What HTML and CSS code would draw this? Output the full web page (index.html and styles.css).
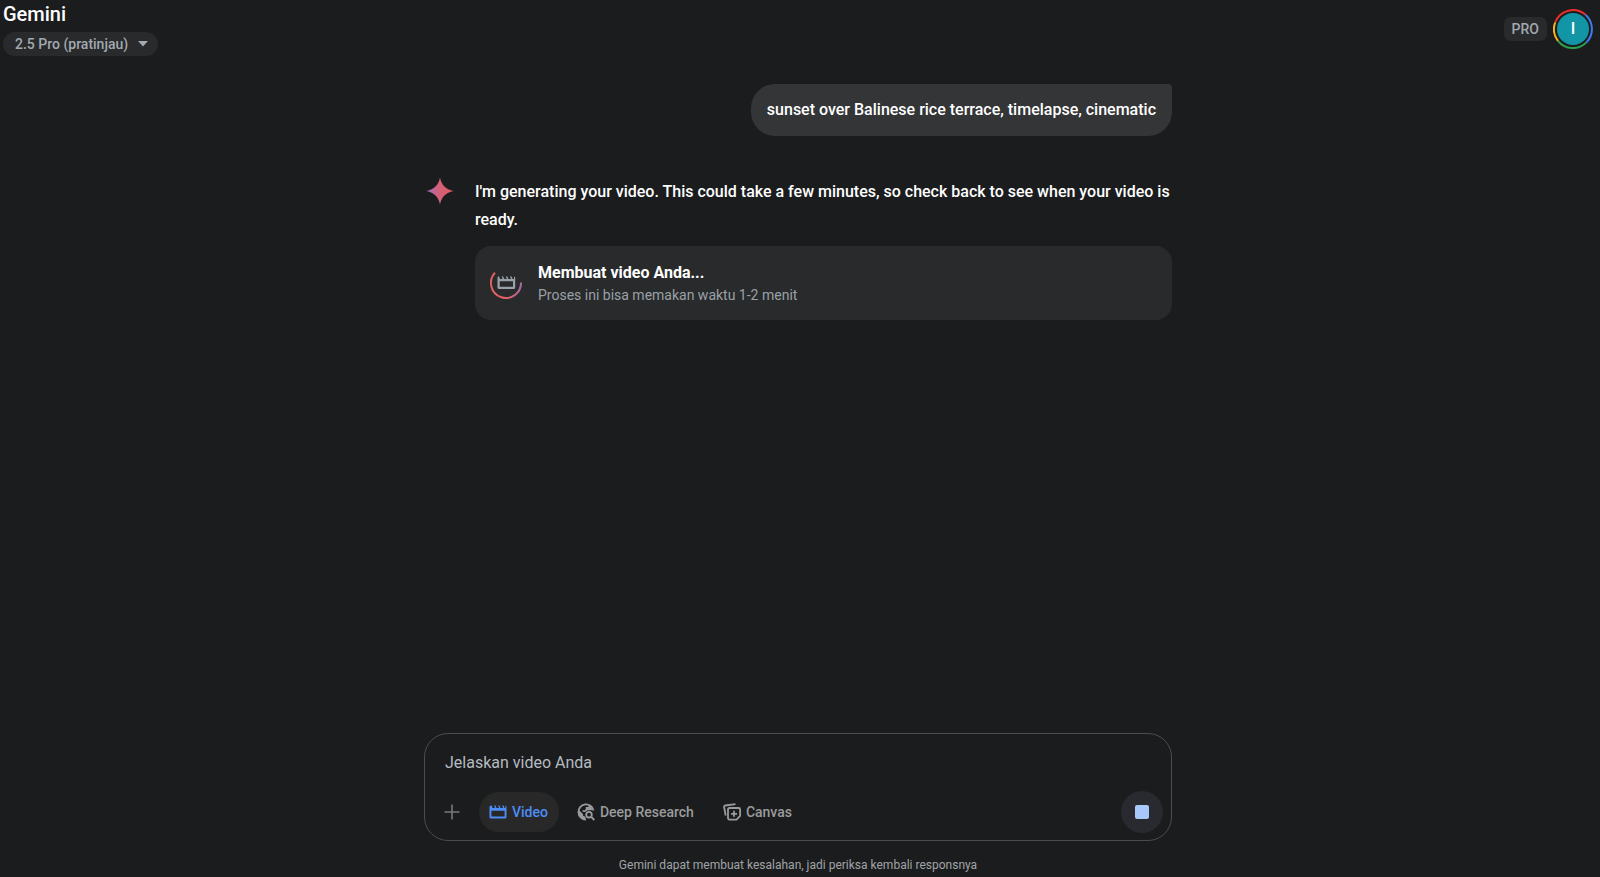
FILE: index.html
```html
<!DOCTYPE html>
<html lang="id">
<head>
    <meta charset="UTF-8">
    <meta name="viewport" content="width=device-width, initial-scale=1.0">
    <title>Gemini</title>
    <link rel="stylesheet" href="styles.css">
</head>
<body>
    <header class="topbar">
        <div class="brand">
            <h1>Gemini</h1>
            <button class="model" type="button">
                2.5 Pro (pratinjau)
                <svg width="10" height="6" viewBox="0 0 10 6"><path d="M0 0h10L5 5.5z" fill="currentColor"/></svg>
            </button>
        </div>
        <div class="account">
            <span class="plan">PRO</span>
            <button class="avatar" type="button" aria-label="Akun">
                <svg class="ring" viewBox="0 0 40 40" fill="none" stroke-width="2">
                    <path d="M2.2 13.5A19 19 0 0 1 32.5 5.8" stroke="#ea2f2a"/>
                    <path d="M32.5 5.8A19 19 0 0 1 33.4 33.4" stroke="#3f7bf0"/>
                    <path d="M33.4 33.4A19 19 0 0 1 5 31.8" stroke="#2ba24c"/>
                    <path d="M5 31.8A19 19 0 0 1 2.2 13.5" stroke="#f9b51e"/>
                </svg>
                <span class="initial">I</span>
            </button>
        </div>
    </header>

    <main class="chat">
        <div class="prompt">
            <p>sunset over Balinese rice terrace, timelapse, cinematic</p>
        </div>

        <div class="response">
            <svg class="spark" viewBox="0 0 28 28">
                <defs>
                    <linearGradient id="spark-fill" x1="0" y1="0" x2="1" y2="0">
                        <stop offset="0" stop-color="#9a6fc0"/>
                        <stop offset="0.4" stop-color="#d0617f"/>
                        <stop offset="1" stop-color="#e05a5c"/>
                    </linearGradient>
                </defs>
                <path d="M14 0.5C15.4 8 20 12.6 27.5 14C20 15.4 15.4 20 14 27.5C12.6 20 8 15.4 0.5 14C8 12.6 12.6 8 14 0.5z" fill="url(#spark-fill)"/>
            </svg>
            <div class="answer">
                <p>I'm generating your video. This could take a few minutes, so check back to see when your video is ready.</p>
                <div class="job">
                    <svg class="progress" viewBox="0 0 32 32">
                        <defs>
                            <linearGradient id="arc" x1="0" y1="0" x2="1" y2="0">
                                <stop offset="0.5" stop-color="#e05f62"/>
                                <stop offset="1" stop-color="#a96a9c"/>
                            </linearGradient>
                        </defs>
                        <path d="M5 5.8A15 15 0 1 0 31 15.5" fill="none" stroke="url(#arc)" stroke-width="2"/>
                        <path d="M8 9.5h1l1 2.500h2.600l-1-2.500h1.600l1 2.500h2.600l-1-2.500h1.600l1 2.500h2.600l-1-2.500h1.600l1 2.500H24v-2.500q1.200.2 1.200 1.500v9.500q0 1.500-1.500 1.500H9Q7.500 22 7.500 20.500V11Q7.500 9.700 8 9.500zM9.700 14.200v5.500h13.300v-5.500z" fill="#9aa0a9" fill-rule="evenodd"/>
                    </svg>
                    <div>
                        <h2>Membuat video Anda...</h2>
                        <p>Proses ini bisa memakan waktu 1-2 menit</p>
                    </div>
                </div>
            </div>
        </div>
    </main>

    <footer class="bottom">
        <form class="composer">
            <input type="text" placeholder="Jelaskan video Anda" aria-label="Jelaskan video Anda">
            <div class="tools">
                <button class="add" type="button" aria-label="Tambah">
                    <svg width="16" height="16" viewBox="0 0 16 16"><path d="M8 0.5v15M0.5 8h15" stroke="currentColor" stroke-width="1.6"/></svg>
                </button>
                <button class="tool active" type="button">
                    <svg width="18" height="18" viewBox="0 0 18 18"><path d="M2 2.5h.5l1 2.500h2.600l-1-2.500h1.400l1 2.500h2.600l-1-2.500h1.400l1 2.500h2.600l-1-2.500h1.400l1 2.500h1V2.500q1 .3 1 1.500v10q0 1.500-1.500 1.500H2Q.5 15.500.5 14V4Q.5 2.500 2 2.500zM2.400 7.800v5.800h13.200V7.800z" fill="currentColor" fill-rule="evenodd"/></svg>
                    Video
                </button>
                <button class="tool" type="button">
                    <svg width="18" height="18" viewBox="0 0 18 18" fill="none" stroke="currentColor" stroke-width="1.8">
                        <path d="M16.500 7.500A7.600 7.600 0 1 0 9 16.600"/>
                        <path d="M1.300 6.500L6 11v1.500l2.500 1.500v2.500A7.500 7.500 0 0 1 1.300 6.500zM5.500 8.800V7.200H8l.8-1.500V4h2.400L12 2l4 4.500-2 .8-3.500 0L8 9z" fill="currentColor" stroke="none"/>
                        <circle cx="12" cy="11.700" r="2.800"/>
                        <path d="M14 13.700l3.300 3.300"/>
                    </svg>
                    Deep Research
                </button>
                <button class="tool" type="button">
                    <svg width="18" height="18" viewBox="0 0 18 18" fill="none" stroke="currentColor" stroke-width="1.8">
                        <path d="M6.500 5h9.100q1.500 0 1.500 1.500V13l-3.600 3.600h-7q-1.500 0-1.500-1.500V6.500Q5 5 6.500 5z"/>
                        <path d="M11 7.800v6M8 10.800h6M2.700 12.500L1.100 4q-.2-1.300 1.100-1.500L12.500 1.100"/>
                    </svg>
                    Canvas
                </button>
                <button class="stop" type="button" aria-label="Hentikan"></button>
            </div>
        </form>
        <p class="disclaimer">Gemini dapat membuat kesalahan, jadi periksa kembali responsnya</p>
    </footer>
</body>
</html>
```
FILE: styles.css
```css
* {
    box-sizing: border-box;
}

body {
    display: flex;
    flex-direction: column;
    min-height: 100vh;
    margin: 0;
    background-color: #1b1c1d;
    color: #fff;
    font-family: Roboto, "Liberation Sans", sans-serif;
    font-size: 16px;
}

h1, h2, p {
    margin: 0;
}

button {
    border: none;
    padding: 0;
    background: none;
    color: inherit;
    font: inherit;
    cursor: pointer;
}

svg {
    flex: none;
}

.topbar {
    display: flex;
    justify-content: space-between;
    padding: 4px 7px 0 3px;
}

.brand h1 {
    font-size: 20px;
    font-weight: 500;
    line-height: 20px;
}

.model {
    display: flex;
    align-items: center;
    gap: 10px;
    height: 24px;
    margin-top: 8px;
    padding: 0 10px 0 12px;
    border-radius: 12px;
    background-color: #282a2c;
    color: #a2a9b0;
    font-size: 14px;
    font-weight: 500;
}

.account {
    display: flex;
    align-items: center;
    gap: 6px;
    height: 49px;
}

.plan {
    padding: 0 8px;
    border-radius: 7px;
    background-color: #282a2c;
    color: #a2a9b0;
    font-size: 14px;
    font-weight: 500;
    line-height: 24px;
}

.avatar {
    display: grid;
    place-items: center;
    width: 40px;
    height: 40px;
}

.ring, .initial {
    grid-area: 1 / 1;
}

.ring {
    width: 40px;
    height: 40px;
}

.initial {
    width: 32px;
    border-radius: 50%;
    background-color: #1295a5;
    font-weight: 500;
    line-height: 32px;
}

.chat {
    flex: 1;
    width: 100%;
    max-width: 752px;
    margin: 0 auto;
    padding: 28px 4px 0 0;
}

.prompt {
    display: flex;
    justify-content: flex-end;
}

.prompt p {
    padding: 12px 16px;
    border-radius: 24px 4px 24px 24px;
    background-color: #333537;
    font-weight: 500;
    line-height: 28px;
}

.response {
    display: flex;
    gap: 21px;
    margin-top: 41px;
}

.spark {
    width: 28px;
    height: 28px;
    margin-left: 2px;
}

.answer {
    flex: 1;
    padding-top: 1px;
    font-weight: 500;
    line-height: 28px;
}

.job {
    display: flex;
    align-items: center;
    gap: 16px;
    margin-top: 12px;
    padding: 15px;
    border-radius: 16px;
    background-color: #282a2c;
}

.job h2 {
    font-size: 16px;
    font-weight: 700;
    line-height: 24px;
}

.job p {
    color: #9aa0a6;
    font-size: 14px;
    font-weight: 400;
    line-height: 20px;
}

.progress {
    width: 32px;
    height: 32px;
}

.bottom {
    width: 100%;
    max-width: 752px;
    margin: 0 auto;
    padding: 0 4px 3px 0;
}

.composer {
    padding: 14px 8px 7px;
    border: 1px solid #4a4d4f;
    border-radius: 24px;
}

.composer input {
    display: block;
    width: 100%;
    height: 28px;
    padding: 0 12px;
    border: none;
    outline: none;
    background: none;
    color: #e3e3e3;
    font: inherit;
}

.composer input::placeholder {
    color: #b5bbc0;
    opacity: 1;
}

.tools {
    display: flex;
    align-items: center;
    margin-top: 15px;
    color: #9a9b9c;
    font-size: 14px;
    font-weight: 500;
}

.add {
    display: grid;
    place-items: center;
    width: 38px;
    height: 40px;
    margin-right: 8px;
    color: #77797b;
}

.tool {
    display: flex;
    align-items: center;
    gap: 5px;
    height: 40px;
    margin-right: 8px;
    padding: 0 11px 0 10px;
    border-radius: 20px;
}

.tool.active {
    background-color: #282828;
    color: #4c8df6;
}

.stop {
    display: grid;
    place-items: center;
    width: 42px;
    height: 42px;
    margin-left: auto;
    border-radius: 50%;
    background-color: #282a2f;
}

.stop::before {
    content: "";
    width: 14px;
    height: 14px;
    border-radius: 2px;
    background-color: #a8c7fa;
}

.disclaimer {
    margin-top: 15px;
    color: #a0a4a8;
    font-size: 12px;
    line-height: 18px;
    text-align: center;
}
```
